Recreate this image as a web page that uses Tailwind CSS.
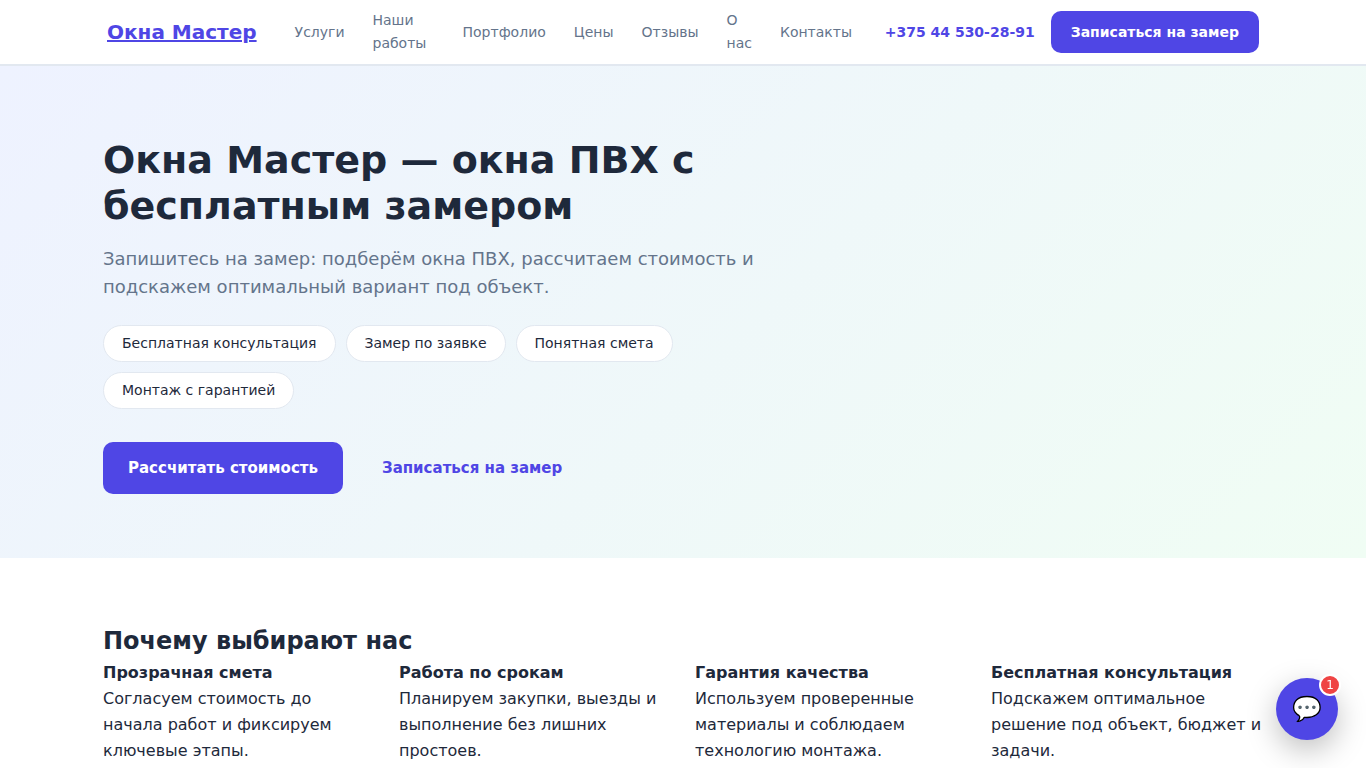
<!DOCTYPE html>
<html lang="ru">
<head>
  <meta charset="UTF-8">
  <meta name="viewport" content="width=device-width, initial-scale=1">
  <title>Окна Мастер — окна ПВХ с бесплатным замером</title>
  <script src="https://cdn.jsdelivr.net/npm/@tailwindcss/browser@4"></script>
</head>
<body class="bg-white font-['DejaVu_Sans',sans-serif] text-base leading-[26px] text-[#1e293b]">
  <!-- Шапка -->
  <header class="sticky top-0 z-10 border-b-2 border-[#e2e8f0] bg-white">
    <div class="mx-auto flex min-h-16 max-w-[1200px] items-center px-6">
      <a href="#" class="mr-[38px] shrink-0 text-xl font-bold text-[#4f46e5] underline">Окна Мастер</a>
      <nav class="mr-[30px] flex flex-1 items-center gap-7 text-sm leading-[23px] text-[#64748b]">
        <a href="#services">Услуги</a>
        <a href="#works" class="w-[62px]">Наши работы</a>
        <a href="#portfolio">Портфолио</a>
        <a href="#prices">Цены</a>
        <a href="#reviews">Отзывы</a>
        <a href="#about">О<br>нас</a>
        <a href="#contacts">Контакты</a>
      </nav>
      <a href="tel:+375445302891" class="mr-4 shrink-0 text-sm font-bold text-[#4f46e5]">+375 44 530-28-91</a>
      <button type="button" class="h-[42px] shrink-0 rounded-[10px] bg-[#4f46e5] px-5 text-sm font-bold text-white">Записаться на замер</button>
    </div>
  </header>

  <main>
    <!-- Первый экран -->
    <section class="bg-linear-135 from-[#eef2ff] to-[#f0fdf4] pt-[71px] pb-16">
      <div class="mx-auto max-w-[1200px] px-5">
        <div class="max-w-[660px]">
          <h1 class="mb-4 text-[38px] leading-[46px] font-bold">Окна Мастер — окна ПВХ с бесплатным замером</h1>
          <p class="mb-6 text-lg leading-7 text-[#64748b]">Запишитесь на замер: подберём окна ПВХ, рассчитаем стоимость и подскажем оптимальный вариант под объект.</p>
          <ul class="mb-[33px] flex flex-wrap gap-[10px] text-sm leading-[23px]">
            <li class="rounded-full border border-[#e2e8f0] bg-white px-[18px] py-[6px]">Бесплатная консультация</li>
            <li class="rounded-full border border-[#e2e8f0] bg-white px-[18px] py-[6px]">Замер по заявке</li>
            <li class="rounded-full border border-[#e2e8f0] bg-white px-[18px] py-[6px]">Понятная смета</li>
            <li class="rounded-full border border-[#e2e8f0] bg-white px-[18px] py-[6px]">Монтаж с гарантией</li>
          </ul>
          <div class="flex items-center gap-[14px] text-[15px] font-bold">
            <button type="button" class="h-[52px] rounded-[10px] bg-[#4f46e5] px-[25px] text-white">Рассчитать стоимость</button>
            <button type="button" class="h-[52px] rounded-[10px] px-[25px] text-[#4f46e5]">Записаться на замер</button>
          </div>
        </div>
      </div>
    </section>

    <!-- Преимущества -->
    <section class="py-16">
      <div class="mx-auto max-w-[1200px] px-5">
        <h2 class="text-2xl leading-[38px] font-bold">Почему выбирают нас</h2>
        <div class="grid grid-cols-4 gap-6">
          <div>
            <h3 class="font-bold">Прозрачная смета</h3>
            <p>Согласуем стоимость до начала работ и фиксируем ключевые этапы.</p>
          </div>
          <div>
            <h3 class="font-bold">Работа по срокам</h3>
            <p>Планируем закупки, выезды и выполнение без лишних простоев.</p>
          </div>
          <div>
            <h3 class="font-bold">Гарантия качества</h3>
            <p>Используем проверенные материалы и соблюдаем технологию монтажа.</p>
          </div>
          <div>
            <h3 class="font-bold">Бесплатная консультация</h3>
            <p>Подскажем оптимальное решение под объект, бюджет и задачи.</p>
          </div>
        </div>
      </div>
    </section>
  </main>

  <!-- Кнопка чата -->
  <button type="button" aria-label="Открыть чат" class="fixed right-7 bottom-7 z-20 flex size-[62px] items-center justify-center rounded-full bg-[#4f46e5] text-2xl shadow-[0_10px_30px_rgba(0,0,0,0.25)]">
    <span>💬</span>
    <span class="absolute -top-1 -right-[3px] flex size-[22px] items-center justify-center rounded-full border-2 border-white bg-[#ef4444] text-xs leading-none text-white">1</span>
  </button>
</body>
</html>
